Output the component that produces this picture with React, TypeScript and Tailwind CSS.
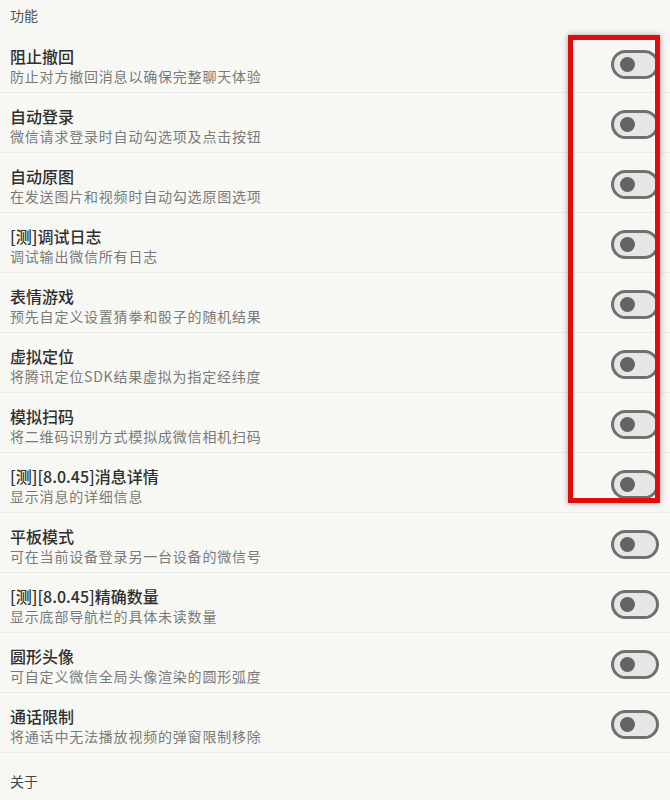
const ITEMS: { title: string; desc: string }[] = [
  { title: '阻止撤回', desc: '防止对方撤回消息以确保完整聊天体验' },
  { title: '自动登录', desc: '微信请求登录时自动勾选项及点击按钮' },
  { title: '自动原图', desc: '在发送图片和视频时自动勾选原图选项' },
  { title: '[测]调试日志', desc: '调试输出微信所有日志' },
  { title: '表情游戏', desc: '预先自定义设置猜拳和骰子的随机结果' },
  { title: '虚拟定位', desc: '将腾讯定位SDK结果虚拟为指定经纬度' },
  { title: '模拟扫码', desc: '将二维码识别方式模拟成微信相机扫码' },
  { title: '[测][8.0.45]消息详情', desc: '显示消息的详细信息' },
  { title: '平板模式', desc: '可在当前设备登录另一台设备的微信号' },
  { title: '[测][8.0.45]精确数量', desc: '显示底部导航栏的具体未读数量' },
  { title: '圆形头像', desc: '可自定义微信全局头像渲染的圆形弧度' },
  { title: '通话限制', desc: '将通话中无法播放视频的弹窗限制移除' },
];

function Toggle() {
  return (
    <div className="w-[48px] h-[29px] rounded-full border-[3px] border-[#707070] bg-[#e6e7e4] flex items-center pl-[6px]">
      <div className="w-[15px] h-[15px] rounded-full bg-[#626462]" />
    </div>
  );
}

export default function App() {
  return (
    <div
      className="relative w-[670px] h-[800px] overflow-hidden bg-[#f7f8f4]"
      style={{ fontFamily: '"Noto Sans CJK SC", "Noto Sans", sans-serif' }}
    >
      <div className="h-[33px] pl-[10px] pt-[4px] text-[14px] text-[#555] leading-[22px]">功能</div>

      {ITEMS.map((it, i) => (
        <div
          key={i}
          className="h-[60px] flex items-center justify-between pl-[10px] pr-[11px] border-b border-[#ebece8]"
        >
          <div className="flex flex-col mt-[6px]">
            <span className="text-[16px] leading-[20px] text-[#2f2f2f] font-medium">{it.title}</span>
            <span className="text-[14px] leading-[20px] tracking-[0.8px] text-[#7a7a7a]">{it.desc}</span>
          </div>
          <div className="mt-[4px]">
            <Toggle />
          </div>
        </div>
      ))}

      <div className="pl-[10px] pt-[17px] text-[14px] text-[#444] leading-[22px]">关于</div>

      <div className="absolute left-[568px] top-[35px] w-[92px] h-[468px] border-[5px] border-[#e00d0d] shadow-[0_0_6px_rgba(0,0,0,0.35)]" />
    </div>
  );
}
